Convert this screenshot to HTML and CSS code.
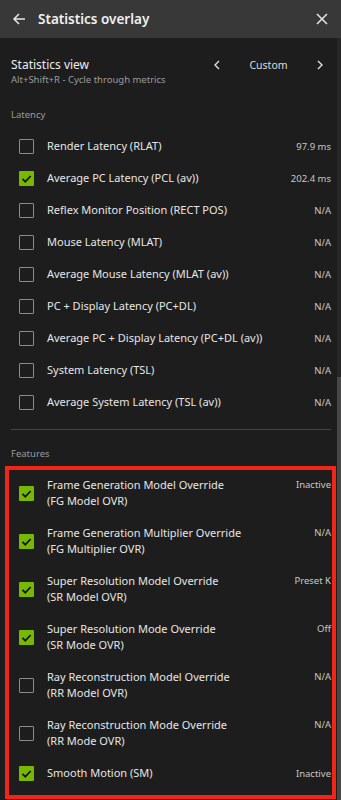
FILE: index.html
```html
<!DOCTYPE html>
<html lang="en">
<head>
  <meta charset="UTF-8">
  <meta name="viewport" content="width=device-width, initial-scale=1.0">
  <title>Statistics overlay</title>
  <link rel="stylesheet" href="styles.css">
</head>
<body>
  <div class="header">
    <svg class="icon back" width="14" height="14" viewBox="0 0 14 14">
      <path d="M13 7H2M7 2L2 7l5 5" fill="none" stroke="#e6e6e6" stroke-width="1.5"/>
    </svg>
    <h1>Statistics overlay</h1>
    <svg class="icon close" width="12" height="12" viewBox="0 0 12 12">
      <path d="M1 1l10 10M11 1L1 11" fill="none" stroke="#e6e6e6" stroke-width="1.5"/>
    </svg>
  </div>

  <div class="main">
    <div class="content">
      <div class="view">
        <div class="view-text">
          <div class="view-title">Statistics view</div>
          <div class="view-sub">Alt+Shift+R - Cycle through metrics</div>
        </div>
        <div class="picker">
          <svg width="6" height="10" viewBox="0 0 6 10"><path d="M5 1L1 5l4 4" fill="none" stroke="#e0e0e0" stroke-width="1.4"/></svg>
          <span>Custom</span>
          <svg width="6" height="10" viewBox="0 0 6 10"><path d="M1 1l4 4-4 4" fill="none" stroke="#e0e0e0" stroke-width="1.4"/></svg>
        </div>
      </div>

      <div class="section-label">Latency</div>
      <div id="latency"></div>

      <div class="divider"></div>

      <div class="section-label features-label">Features</div>
      <div class="highlight">
        <div id="features"></div>
      </div>
    </div>
    <div class="scrollbar">
      <div class="track"></div>
      <div class="thumb"></div>
    </div>
  </div>

  <script>
    const latency = [
      { name: 'Render Latency (RLAT)', value: '97.9 ms', on: false },
      { name: 'Average PC Latency (PCL (av))', value: '202.4 ms', on: true },
      { name: 'Reflex Monitor Position (RECT POS)', value: 'N/A', on: false },
      { name: 'Mouse Latency (MLAT)', value: 'N/A', on: false },
      { name: 'Average Mouse Latency (MLAT (av))', value: 'N/A', on: false },
      { name: 'PC + Display Latency (PC+DL)', value: 'N/A', on: false },
      { name: 'Average PC + Display Latency (PC+DL (av))', value: 'N/A', on: false },
      { name: 'System Latency (TSL)', value: 'N/A', on: false },
      { name: 'Average System Latency (TSL (av))', value: 'N/A', on: false },
    ];

    const features = [
      { name: 'Frame Generation Model Override', short: '(FG Model OVR)', value: 'Inactive', on: true },
      { name: 'Frame Generation Multiplier Override', short: '(FG Multiplier OVR)', value: 'N/A', on: true },
      { name: 'Super Resolution Model Override', short: '(SR Model OVR)', value: 'Preset K', on: true },
      { name: 'Super Resolution Mode Override', short: '(SR Mode OVR)', value: 'Off', on: true },
      { name: 'Ray Reconstruction Model Override', short: '(RR Model OVR)', value: 'N/A', on: false },
      { name: 'Ray Reconstruction Mode Override', short: '(RR Mode OVR)', value: 'N/A', on: false },
      { name: 'Smooth Motion (SM)', short: '', value: 'Inactive', on: true },
    ];

    const checkbox = (on) => on
      ? `<span class="check on"><svg width="15" height="15" viewBox="0 0 15 15"><path d="M3.5 7.8l2.8 2.8 5.4-5.6" fill="none" stroke="#151515" stroke-width="1.8"/></svg></span>`
      : `<span class="check"></span>`;

    const renderRows = (id, items) => {
      const container = document.getElementById(id);
      items.forEach((item) => {
        const row = document.createElement('div');
        row.className = item.short ? 'row two-line' : 'row';
        row.innerHTML = `
          ${checkbox(item.on)}
          <div class="name">${item.name}${item.short ? `<br>${item.short}` : ''}</div>
          <span class="value">${item.value}</span>
        `;
        container.appendChild(row);
      });
    };

    renderRows('latency', latency);
    renderRows('features', features);
  </script>
</body>
</html>
```

FILE: styles.css
```css
* {
  margin: 0;
  padding: 0;
  box-sizing: border-box;
}
body {
  font-family: "Noto Sans", Arial, sans-serif;
  background-color: #1d1d1d;
  color: #e8e8e8;
  width: 341px;
  height: 800px;
  overflow: hidden;
}
.header {
  height: 38px;
  background-color: #383838;
  display: flex;
  align-items: center;
  padding: 0 13px 0 12px;
}
.header h1 {
  font-size: 13.5px;
  font-weight: 600;
  color: #f0f0f0;
  margin-left: 12px;
  flex: 1;
}
.main {
  display: flex;
  height: 762px;
}
.content {
  flex: 1;
  padding: 19px 6px 0 11px;
}
.scrollbar {
  width: 4px;
  display: flex;
  flex-direction: column;
}
.track {
  height: 339px;
  background-color: #262626;
}
.thumb {
  flex: 1;
  background-color: #474747;
}
.view {
  display: flex;
  justify-content: space-between;
}
.view-title {
  font-size: 12px;
  line-height: 16px;
  color: #ececec;
}
.view-sub {
  font-size: 9.5px;
  line-height: 14px;
  color: #9c9c9c;
}
.picker {
  display: flex;
  align-items: center;
  justify-content: space-between;
  width: 120px;
  height: 16px;
  padding: 0 8px 0 3px;
  font-size: 10.5px;
  color: #dedede;
}
.section-label {
  font-size: 9.5px;
  line-height: 14px;
  color: #9b9b9b;
  margin-top: 21px;
  margin-bottom: 8px;
}
.features-label {
  margin-top: 17px;
  margin-bottom: 5px;
}
.row {
  display: flex;
  align-items: center;
  height: 32px;
  padding-left: 8px;
}
.row.two-line {
  height: 48px;
}
.check {
  width: 15px;
  height: 15px;
  border: 1.5px solid #8c8c8c;
  border-radius: 1px;
  flex-shrink: 0;
  margin-right: 13px;
}
.check.on {
  border: none;
  background-color: #76b900;
}
.check svg {
  display: block;
}
.name {
  flex: 1;
  font-size: 11px;
  line-height: 16px;
  color: #e6e6e6;
}
.value {
  font-size: 9.5px;
  color: #c8c8c8;
  align-self: center;
}
.two-line .value {
  align-self: flex-start;
  margin-top: 9px;
}
.divider {
  height: 1px;
  background-color: #454545;
  margin-top: 11px;
}
.highlight {
  border: 4px solid #f0261a;
  margin: 0 -5px 0 -6px;
  padding: 0 1px 0 2px;
  height: 333px;
}
.highlight .row:first-child {
  margin-top: -1px;
}
```
